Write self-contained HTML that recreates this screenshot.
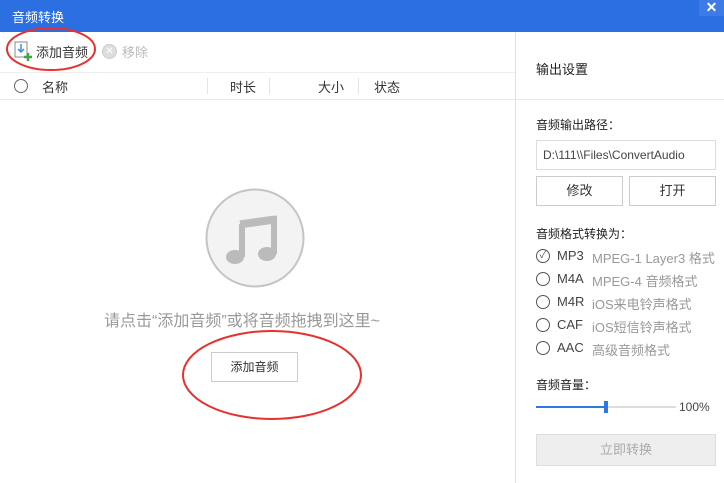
<!DOCTYPE html>
<html><head><meta charset="utf-8"><style>
*{margin:0;padding:0;box-sizing:border-box}
body{width:724px;height:483px;overflow:hidden;background:#fff;font-family:"Liberation Sans","Noto Sans CJK SC",sans-serif;font-size:12px;color:#333;position:relative}
.a{position:absolute}
.rb{position:absolute;width:14px;height:14px;border:1px solid #555;border-radius:50%}
.fmt{position:absolute;left:557px;font-size:13px;color:#444}
.fmt span{position:absolute;left:35px;color:#999;white-space:nowrap;font-size:13px;top:0}
.btn{position:absolute;border:1px solid #ccc;background:#fff;text-align:center;font-size:13px;color:#333}
</style></head><body>
<div class="a" style="left:0;top:0;width:724px;height:32px;background:#2b6fe2"></div>
<div class="a" style="left:12px;top:7px;color:#fff;font-size:13px">音频转换</div>
<div class="a" style="left:699px;top:0;width:25px;height:16px;background:#3d7be6;color:#fff;font-size:14px;text-align:center;line-height:15px;font-weight:bold">✕</div>
<svg class="a" style="left:14px;top:41px" width="20" height="20"><rect x="1" y="1" width="12" height="15" fill="#fff" stroke="#888"/><path d="M7 3v8M4 8l3 3 3-3" stroke="#3a8ee6" stroke-width="1.5" fill="none"/><path d="M14 12v8M10 16h8" stroke="#3aa844" stroke-width="2.5"/></svg>
<div class="a" style="left:36px;top:42px;font-size:13px;color:#333">添加音频</div>
<div class="a" style="left:102px;top:44px;width:15px;height:15px;border-radius:50%;background:#ddd;border:1px solid #ccc;color:#fff;font-size:10px;text-align:center;line-height:13px">✕</div>
<div class="a" style="left:122px;top:42px;font-size:13px;color:#bbb">移除</div>
<div class="a" style="left:0;top:72px;width:515px;height:1px;background:#eee"></div>
<div class="rb" style="left:14px;top:79px;border-color:#666"></div>
<div class="a" style="left:42px;top:77px;font-size:13px">名称</div>
<div class="a" style="left:207px;top:78px;width:1px;height:16px;background:#e5e5e5"></div>
<div class="a" style="left:230px;top:77px;font-size:13px">时长</div>
<div class="a" style="left:269px;top:78px;width:1px;height:16px;background:#e5e5e5"></div>
<div class="a" style="left:318px;top:77px;font-size:13px">大小</div>
<div class="a" style="left:358px;top:78px;width:1px;height:16px;background:#e5e5e5"></div>
<div class="a" style="left:374px;top:77px;font-size:13px">状态</div>
<div class="a" style="left:0;top:99px;width:515px;height:1px;background:#e8e8e8"></div>
<div class="a" style="left:515px;top:32px;width:1px;height:451px;background:#e0e0e0"></div>
<svg class="a" style="left:204px;top:188px" width="102" height="102"><circle cx="51" cy="50" r="48.5" fill="#f3f3f3" stroke="#c4c4c4" stroke-width="2"/><path d="M38 36l32-5v35" stroke="#bbb" stroke-width="6" fill="none"/><path d="M38 36v33" stroke="#bbb" stroke-width="6"/><rect x="36" y="30" width="35" height="8" fill="#bbb" transform="rotate(-8 53 34)"/><ellipse cx="31" cy="69" rx="9" ry="7" fill="#bbb"/><ellipse cx="63" cy="66" rx="9" ry="7" fill="#bbb"/></svg>
<div class="a" style="left:104px;top:307px;font-size:16px;color:#999;white-space:nowrap">请点击“添加音频”或将音频拖拽到这里~</div>
<div class="btn" style="left:211px;top:352px;width:87px;height:30px;line-height:28px;font-size:12px">添加音频</div>
<svg class="a" style="left:0;top:0" width="515" height="483"><ellipse cx="51" cy="49" rx="44" ry="21" fill="none" stroke="#e8302f" stroke-width="2"/><ellipse cx="272" cy="375" rx="89" ry="44" fill="none" stroke="#e8302f" stroke-width="2"/></svg>
<div class="a" style="left:536px;top:59px;font-size:13px;color:#222">输出设置</div>
<div class="a" style="left:516px;top:99px;width:208px;height:1px;background:#e8e8e8"></div>
<div class="a" style="left:536px;top:116px;font-size:12px;color:#222">音频输出路径：</div>
<div class="a" style="left:536px;top:140px;width:180px;height:30px;border:1px solid #ddd;padding-left:6px;line-height:28px;font-size:12px;color:#444">D:\111\\Files\ConvertAudio</div>
<div class="btn" style="left:536px;top:176px;width:87px;height:30px;line-height:28px">修改</div>
<div class="btn" style="left:629px;top:176px;width:87px;height:30px;line-height:28px">打开</div>
<div class="a" style="left:536px;top:225px;font-size:12px;color:#222">音频格式转换为：</div>
<div class="rb" style="left:536px;top:249px;color:#555;font-size:10px;text-align:center;line-height:12px">✓</div>
<div class="fmt" style="top:248px">MP3<span>MPEG-1 Layer3 格式</span></div>
<div class="rb" style="left:536px;top:272px"></div><div class="fmt" style="top:271px">M4A<span>MPEG-4 音频格式</span></div>
<div class="rb" style="left:536px;top:295px"></div><div class="fmt" style="top:294px">M4R<span>iOS来电铃声格式</span></div>
<div class="rb" style="left:536px;top:318px"></div><div class="fmt" style="top:317px">CAF<span>iOS短信铃声格式</span></div>
<div class="rb" style="left:536px;top:341px"></div><div class="fmt" style="top:340px">AAC<span>高级音频格式</span></div>
<div class="a" style="left:536px;top:376px;font-size:12px;color:#222">音频音量：</div>
<div class="a" style="left:536px;top:406px;width:140px;height:2px;background:#ddd"></div>
<div class="a" style="left:536px;top:406px;width:70px;height:2px;background:#2f78e4"></div>
<div class="a" style="left:604px;top:401px;width:4px;height:12px;background:#2f78e4"></div>
<div class="a" style="left:679px;top:400px;font-size:12px;color:#444">100%</div>
<div class="a" style="left:536px;top:434px;width:180px;height:32px;border:1px solid #ddd;background:#eee;text-align:center;line-height:30px;font-size:13px;color:#aaa">立即转换</div>
</body></html>
